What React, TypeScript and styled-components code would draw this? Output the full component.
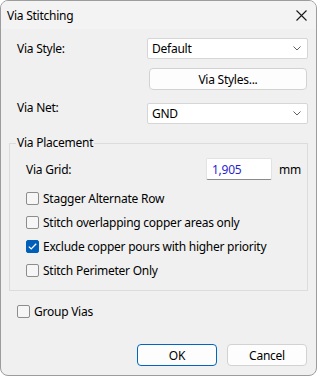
import React from "react";
import styled, { createGlobalStyle } from "styled-components";

const GlobalStyle = createGlobalStyle`
  html, body {
    margin: 0;
    padding: 0;
    background: #ffffff;
  }
  * {
    box-sizing: border-box;
  }
`;

const Window = styled.div`
  width: 317px;
  height: 376px;
  border: 1px solid #9c9c9c;
  border-radius: 8px;
  overflow: hidden;
  background: #f0f0f0;
  display: flex;
  flex-direction: column;
  font-family: "Noto Sans", "Open Sans", sans-serif;
  font-size: 12px;
  letter-spacing: -0.25px;
  color: #000;
`;

const TitleBar = styled.div`
  height: 28px;
  display: flex;
  align-items: center;
  justify-content: space-between;
  padding: 0 9px 0 6px;
  background: #f3f3f3;
`;

const Title = styled.span`
  font-size: 12px;
`;

const Content = styled.div`
  flex: 1;
  display: flex;
  flex-direction: column;
  padding: 9px 8px 9px 8px;
`;

const FormGrid = styled.div`
  display: grid;
  grid-template-columns: 138px 1fr;
  align-items: center;
`;

const Label = styled.span<{ $indent?: number }>`
  padding-left: ${p => p.$indent ?? 8}px;
`;

const Combo = styled.div<{ $top?: number }>`
  height: 21px;
  margin-top: ${p => p.$top ?? 0}px;
  background: #ffffff;
  border: 1px solid #d6d6d6;
  border-radius: 2px;
  display: flex;
  align-items: center;
  justify-content: space-between;
  padding: 0 6px 0 4px;
`;

const Button = styled.button<{ $default?: boolean; $width?: number }>`
  height: 22px;
  width: ${p => (p.$width ? `${p.$width}px` : "auto")};
  background: #fdfdfd;
  border: 1px solid ${p => (p.$default ? "#0067c0" : "#d2d2d2")};
  border-radius: 4px;
  font-family: inherit;
  font-size: 12px;
  letter-spacing: inherit;
  color: #000;
  padding: 0;
`;

const StylesButton = styled(Button)`
  grid-column: 2;
  margin: 9px 1px 0 2px;
`;

const GroupBox = styled.fieldset`
  margin: 11px 0 0 0;
  padding: 7px 8px 8px 16px;
  border: 1px solid #dcdcdc;
  border-radius: 0;
  min-width: 0;
`;

const Legend = styled.legend`
  padding: 0 1px;
  margin-left: -10px;
  line-height: 16px;
`;

const GridRow = styled.div`
  display: flex;
  align-items: center;
  height: 22px;
  margin-bottom: 6px;
`;

const Spacer = styled.div`
  flex: 1;
`;

const Edit = styled.div`
  width: 66px;
  height: 22px;
  background: #ffffff;
  border: 1px solid #e2e2e2;
  border-bottom: 1px solid #8a8a8a;
  border-radius: 2px;
  display: flex;
  align-items: center;
  padding-left: 5px;
  color: #2a1fd0;
`;

const Unit = styled.span`
  margin-left: 7px;
  width: 20px;
`;

const CheckRow = styled.div<{ $indent?: number; $top?: number }>`
  height: 24px;
  display: flex;
  align-items: center;
  gap: 4px;
  padding-left: ${p => p.$indent ?? 0}px;
  margin-top: ${p => p.$top ?? 0}px;
`;

const Box = styled.span<{ $checked?: boolean }>`
  width: 13px;
  height: 13px;
  border-radius: 2px;
  border: 1px solid ${p => (p.$checked ? "#005fb8" : "#8d8d8d")};
  background: ${p => (p.$checked ? "#005fb8" : "#f6f6f6")};
  display: flex;
  align-items: center;
  justify-content: center;
  flex-shrink: 0;
`;

const Footer = styled.div`
  display: flex;
  justify-content: flex-end;
  gap: 10px;
  padding-right: 1px;
`;

const Chevron = () => (
  <svg width="8" height="5" viewBox="0 0 8 5">
    <path d="M0.5 0.5 L4 4 L7.5 0.5" fill="none" stroke="#606060" strokeWidth="1" />
  </svg>
);

const Close = () => (
  <svg width="11" height="11" viewBox="0 0 11 11">
    <path d="M0.5 0.5 L10.5 10.5 M10.5 0.5 L0.5 10.5" stroke="#1a1a1a" strokeWidth="1.1" />
  </svg>
);

const Check = ({ label, checked, indent, top }: { label: string; checked?: boolean; indent?: number; top?: number }) => (
  <CheckRow $indent={indent} $top={top}>
    <Box $checked={checked}>
      {checked && (
        <svg width="9" height="7" viewBox="0 0 9 7">
          <path d="M0.8 3.6 L3.2 5.9 L8.2 0.8" fill="none" stroke="#fff" strokeWidth="1.3" />
        </svg>
      )}
    </Box>
    <span>{label}</span>
  </CheckRow>
);

export default function App() {
  return (
    <>
      <GlobalStyle />
      <Window>
        <TitleBar>
          <Title>Via Stitching</Title>
          <Close />
        </TitleBar>
        <Content>
          <FormGrid>
            <Label>Via Style:</Label>
            <Combo>
              <span>Default</span>
              <Chevron />
            </Combo>
            <StylesButton>Via Styles...</StylesButton>
            <Label>Via Net:</Label>
            <Combo $top={13}>
              <span>GND</span>
              <Chevron />
            </Combo>
          </FormGrid>

          <GroupBox>
            <Legend>Via Placement</Legend>
            <GridRow>
              <span>Via Grid:</span>
              <Spacer />
              <Edit>1,905</Edit>
              <Unit>mm</Unit>
            </GridRow>
            <Check label="Stagger Alternate Row" />
            <Check label="Stitch overlapping copper areas only" />
            <Check label="Exclude copper pours with higher priority" checked />
            <Check label="Stitch Perimeter Only" />
          </GroupBox>

          <Check label="Group Vias" indent={8} top={8} />

          <Spacer />
          <Footer>
            <Button $default $width={80}>OK</Button>
            <Button $width={80}>Cancel</Button>
          </Footer>
        </Content>
      </Window>
    </>
  );
}
